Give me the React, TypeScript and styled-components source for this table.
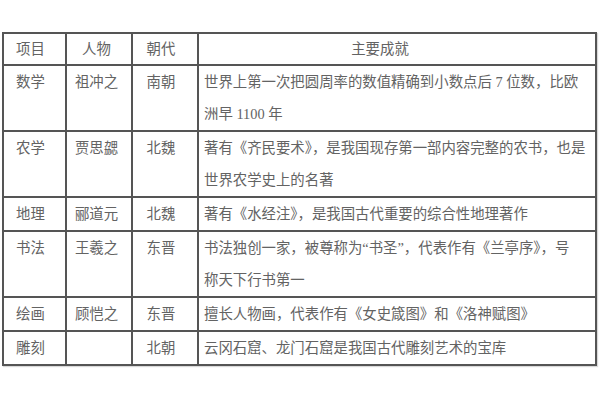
import styled, { createGlobalStyle } from 'styled-components';

const GlobalStyle = createGlobalStyle`
    html, body {
        margin: 0;
        padding: 0;
        background: #ffffff;
    }
`;

const StyledPage = styled.div`
    width: 600px;
    height: 400px;
    padding: 32px 3px 0 2px;
    box-sizing: border-box;
    font-family: 'Liberation Serif', 'Noto Sans CJK SC', serif;
    color: #636363;
`;

const StyledTable = styled.table`
    width: 595px;
    border-collapse: collapse;
    table-layout: fixed;
    border: 2px solid #555;
    box-shadow: 1px 1px 1px rgba(0, 0, 0, 0.15);
    font-size: 14.4px;
`;

interface CellProps {
    $center?: boolean;
    $shift?: number;
}

const StyledHeadCell = styled.th<CellProps>`
    border: 2px solid #555;
    padding: 0 ${props => props.$shift ?? 8}px 0 0;
    line-height: 30px;
    font-weight: 400;
    text-align: center;
    vertical-align: top;
`;

const StyledCell = styled.td<CellProps>`
    border: 2px solid #555;
    padding: ${props => (props.$center ? `0 ${props.$shift ?? 8}px 0 0` : '0 0 0 5px')};
    line-height: 32px;
    text-align: ${props => (props.$center ? 'center' : 'left')};
    vertical-align: top;
    white-space: nowrap;
    overflow: hidden;
`;

interface RowData {
    subject: string;
    person: string;
    dynasty: string;
    lines: string[];
}

const rows: RowData[] = [
    {
        subject: '数学',
        person: '祖冲之',
        dynasty: '南朝',
        lines: ['世界上第一次把圆周率的数值精确到小数点后 7 位数，比欧', '洲早 1100 年'],
    },
    {
        subject: '农学',
        person: '贾思勰',
        dynasty: '北魏',
        lines: ['著有《齐民要术》，是我国现存第一部内容完整的农书，也是', '世界农学史上的名著'],
    },
    {
        subject: '地理',
        person: '郦道元',
        dynasty: '北魏',
        lines: ['著有《水经注》，是我国古代重要的综合性地理著作'],
    },
    {
        subject: '书法',
        person: '王羲之',
        dynasty: '东晋',
        lines: ['书法独创一家，被尊称为“书圣”，代表作有《兰亭序》，号', '称天下行书第一'],
    },
    {
        subject: '绘画',
        person: '顾恺之',
        dynasty: '东晋',
        lines: ['擅长人物画，代表作有《女史箴图》和《洛神赋图》'],
    },
    {
        subject: '雕刻',
        person: '',
        dynasty: '北朝',
        lines: ['云冈石窟、龙门石窟是我国古代雕刻艺术的宝库'],
    },
];

function App() {
    const renderedRows = rows.map(row => (
        <tr key={row.subject}>
            <StyledCell $center>{row.subject}</StyledCell>
            <StyledCell $center $shift={5}>{row.person}</StyledCell>
            <StyledCell $center>{row.dynasty}</StyledCell>
            <StyledCell>
                {row.lines.map(line => (
                    <div key={line}>{line}</div>
                ))}
            </StyledCell>
        </tr>
    ));

    return (
        <>
            <GlobalStyle />
            <StyledPage>
                <StyledTable>
                    <colgroup>
                        <col style={{ width: 63 }} />
                        <col style={{ width: 66 }} />
                        <col style={{ width: 66 }} />
                        <col />
                    </colgroup>
                    <thead>
                        <tr>
                            <StyledHeadCell $shift={8}>项目</StyledHeadCell>
                            <StyledHeadCell $shift={5}>人物</StyledHeadCell>
                            <StyledHeadCell $shift={8}>朝代</StyledHeadCell>
                            <StyledHeadCell $shift={34}>主要成就</StyledHeadCell>
                        </tr>
                    </thead>
                    <tbody>{renderedRows}</tbody>
                </StyledTable>
            </StyledPage>
        </>
    );
}

export default App;
